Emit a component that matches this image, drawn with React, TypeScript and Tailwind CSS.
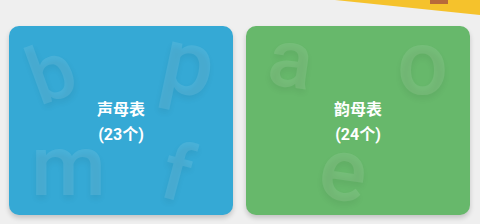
const cards = [
  {
    title: "声母表",
    count: "(23个)",
    bg: "bg-[#35a9d5]",
    letters: [
      { ch: "b", cls: "left-[20px] top-[7px] text-[80px] -rotate-[20deg]" },
      { ch: "p", cls: "left-[154px] -top-[9px] text-[92px] rotate-[12deg]" },
      { ch: "m", cls: "left-[22px] top-[97px] text-[86px]" },
      { ch: "f", cls: "left-[154px] top-[107px] text-[80px] rotate-[15deg]" },
    ],
  },
  {
    title: "韵母表",
    count: "(24个)",
    bg: "bg-[#67b86b]",
    letters: [
      { ch: "a", cls: "left-[23px] -top-[8px] text-[82px] rotate-[8deg]" },
      { ch: "o", cls: "left-[151px] -top-[7px] text-[90px]" },
      { ch: "e", cls: "left-[74px] top-[100px] text-[88px] rotate-[8deg]" },
    ],
  },
];

export default function App() {
  return (
    <div className="relative w-[480px] h-[224px] overflow-hidden bg-[#efefef] font-['Roboto','Noto_Sans_CJK_SC',sans-serif]">

      {/* banner corner peeking in from above */}
      <svg className="absolute left-0 top-0" width="480" height="20" viewBox="0 0 480 20">
        <polygon points="335,0 480,0 480,15" fill="#f5c22c" />
        <rect x="430" y="0" width="18" height="4" fill="#b8693a" />
      </svg>

      <div className="flex gap-[13px] pl-[9px] pt-[26px]">
        {cards.map((card) => (
          <div
            key={card.title}
            className={`relative w-[224px] h-[189px] rounded-[10px] overflow-hidden shadow-[0_3px_5px_rgba(0,0,0,0.18)] ${card.bg}`}
          >
            {card.letters.map((l) => (
              <span
                key={l.ch}
                className={`absolute leading-none font-medium text-white/10 origin-center [text-shadow:0_4px_6px_rgba(0,0,0,0.06)] ${l.cls}`}
              >
                {l.ch}
              </span>
            ))}

            <div className="relative flex h-full flex-col items-center justify-center pt-[2px] text-white font-bold text-[16px] leading-[25px]">
              <div>{card.title}</div>
              <div>{card.count}</div>
            </div>
          </div>
        ))}
      </div>

    </div>
  );
}
